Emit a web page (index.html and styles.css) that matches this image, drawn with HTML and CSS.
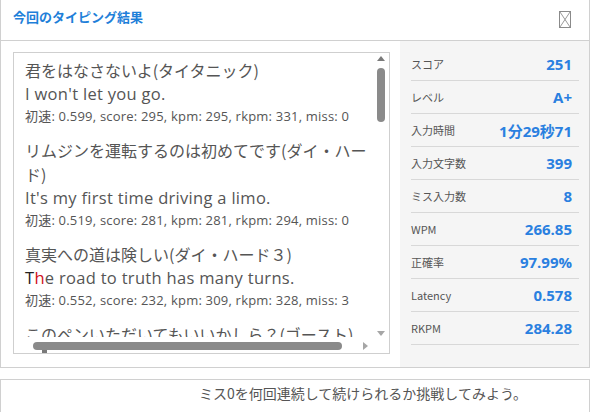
FILE: index.html
```html
<!DOCTYPE html>
<html lang="ja">
<head>
<meta charset="utf-8">
<title>今回のタイピング結果</title>
<link rel="stylesheet" href="styles.css">
</head>
<body>
<div class="panel">
  <div class="head">
    <h2 class="title">今回のタイピング結果</h2>
    <span class="close" aria-label="閉じる">
      <svg width="12" height="17" viewBox="0 0 12 17"><rect x="0.5" y="0.5" width="11" height="16" fill="#fff" stroke="#8a8a8a"/><path d="M1 1 L11 16 M11 1 L1 16" stroke="#9a9a9a" stroke-width="1" fill="none"/></svg>
    </span>
  </div>
  <div class="body">
    <div class="left">
      <div class="log">
        <div class="log-inner">
          <div class="entry">
            <div class="jp">君をはなさないよ(タイタニック)</div>
            <div class="en">I won't let you go.</div>
            <div class="meta">初速: 0.599, score: 295, kpm: 295, rkpm: 331, miss: 0</div>
          </div>
          <div class="entry">
            <div class="jp">リムジンを運転するのは初めてです(ダイ・ハー<br>ド)</div>
            <div class="en">It's my first time driving a limo.</div>
            <div class="meta">初速: 0.519, score: 281, kpm: 281, rkpm: 294, miss: 0</div>
          </div>
          <div class="entry">
            <div class="jp">真実への道は険しい(ダイ・ハード３)</div>
            <div class="en"><span class="typed">T</span><span class="miss">h</span>e road to truth has many turns.</div>
            <div class="meta">初速: 0.552, score: 232, kpm: 309, rkpm: 328, miss: 3</div>
          </div>
          <div class="entry">
            <div class="jp">このペンいただいてもいいかしら？(ゴースト)</div>
          </div>
        </div>
        <div class="vbar">
          <span class="arrow up"></span>
          <span class="vthumb"></span>
          <span class="arrow down"></span>
        </div>
        <div class="hbar">
          <span class="arrow left"></span>
          <span class="hthumb"></span>
          <span class="arrow right"></span>
        </div>
      </div>
    </div>
    <div class="stats">
      <div class="row"><span class="label">スコア</span><span class="value">251</span></div>
      <div class="row"><span class="label">レベル</span><span class="value">A+</span></div>
      <div class="row"><span class="label">入力時間</span><span class="value">1分29秒71</span></div>
      <div class="row"><span class="label">入力文字数</span><span class="value">399</span></div>
      <div class="row"><span class="label">ミス入力数</span><span class="value">8</span></div>
      <div class="row"><span class="label">WPM</span><span class="value">266.85</span></div>
      <div class="row"><span class="label">正確率</span><span class="value">97.99%</span></div>
      <div class="row"><span class="label">Latency</span><span class="value">0.578</span></div>
      <div class="row"><span class="label">RKPM</span><span class="value">284.28</span></div>
    </div>
  </div>
</div>
<div class="footer">ミス0を何回連続して続けられるか挑戦してみよう。</div>
</body>
</html>
```
FILE: styles.css
```css
* { box-sizing: border-box; }
html, body { margin: 0; padding: 0; background: #fff; }
body {
  font-family: "Open Sans", "Noto Sans CJK JP", sans-serif;
  color: #555;
  width: 593px;
}
.panel {
  width: 590px;
  border: 1px solid #d0d0d0;
  border-top: none;
}
.head {
  height: 41px;
  border-bottom: 1px solid #d0d0d0;
  display: flex;
  align-items: center;
  justify-content: space-between;
  padding: 0 18px 0 12px;
}
.title {
  margin: 0;
  font-size: 13px;
  font-weight: bold;
  color: #1e7fd9;
  font-family: "Noto Sans CJK JP", sans-serif;
  line-height: 1;
  position: relative;
  top: -4px;
}
.close { display: flex; position: relative; top: -1px; }
.body {
  display: flex;
}
.left {
  width: 399px;
  padding: 11px 10px 12px 12px;
}
.log {
  position: relative;
  height: 302px;
  border: 1px solid #cfcfcf;
  overflow: hidden;
}
.log-inner {
  padding: 5px 0 0 11px;
  width: 358px;
  height: 284px;
  overflow: hidden;
  white-space: nowrap;
}
.entry { margin-bottom: 12px; }
.jp, .en {
  font-size: 16px;
  line-height: 24px;
}
.jp { font-family: "Noto Sans CJK JP", sans-serif; }
.en { font-size: 16.5px; letter-spacing: 0.3px; }
.meta {
  font-size: 13px;
  letter-spacing: 0.2px;
  line-height: 20px;
  font-family: "Open Sans", "Noto Sans CJK JP", sans-serif;
}
.typed { color: #222; }
.miss { color: #d0101a; }
.vbar {
  position: absolute;
  right: 0;
  top: 0;
  width: 16px;
  bottom: 14px;
}
.vthumb {
  position: absolute;
  left: 4px;
  top: 15px;
  width: 8px;
  height: 54px;
  border-radius: 4px;
  background: #8a8a8a;
}
.hbar {
  position: absolute;
  left: 0;
  bottom: 0;
  height: 14px;
  right: 16px;
}
.hthumb {
  position: absolute;
  left: 19px;
  top: 3px;
  height: 8px;
  width: 309px;
  border-radius: 4px;
  background: #8a8a8a;
}
.arrow {
  position: absolute;
  width: 0;
  height: 0;
  border: 4px solid transparent;
}
.arrow.up { left: 4px; top: 3px; border-bottom: 5px solid #7a7a7a; border-top: 0; }
.arrow.down { left: 4px; bottom: 3px; border-top: 5px solid #a6a6a6; border-bottom: 0; }
.arrow.left { left: 6px; top: 3px; border-right: 5px solid #7a7a7a; border-left: 0; }
.arrow.right { right: 5px; top: 3px; border-left: 5px solid #a6a6a6; border-right: 0; }
.stats {
  flex: 1;
  background: #f5f5f5;
  padding: 7px 10px 22px 11px;
}
.row {
  display: flex;
  justify-content: space-between;
  align-items: center;
  height: 33px;
  border-bottom: 1px solid #d8d8d8;
  padding: 0 7px 0 0;
}
.label {
  font-size: 11px;
  color: #555;
  font-family: "Noto Sans CJK JP", sans-serif;
}
.value {
  font-size: 15px;
  font-weight: bold;
  color: #2a80e0;
  font-family: "Open Sans", "Noto Sans CJK JP", sans-serif;
}
.footer {
  margin-top: 11px;
  width: 590px;
  border: 1px solid #d0d0d0;
  border-bottom: none;
  padding: 3px 0 10px 198px;
  font-size: 14px;
  line-height: 20px;
  color: #555;
  font-family: "Noto Sans CJK JP", sans-serif;
}
```
